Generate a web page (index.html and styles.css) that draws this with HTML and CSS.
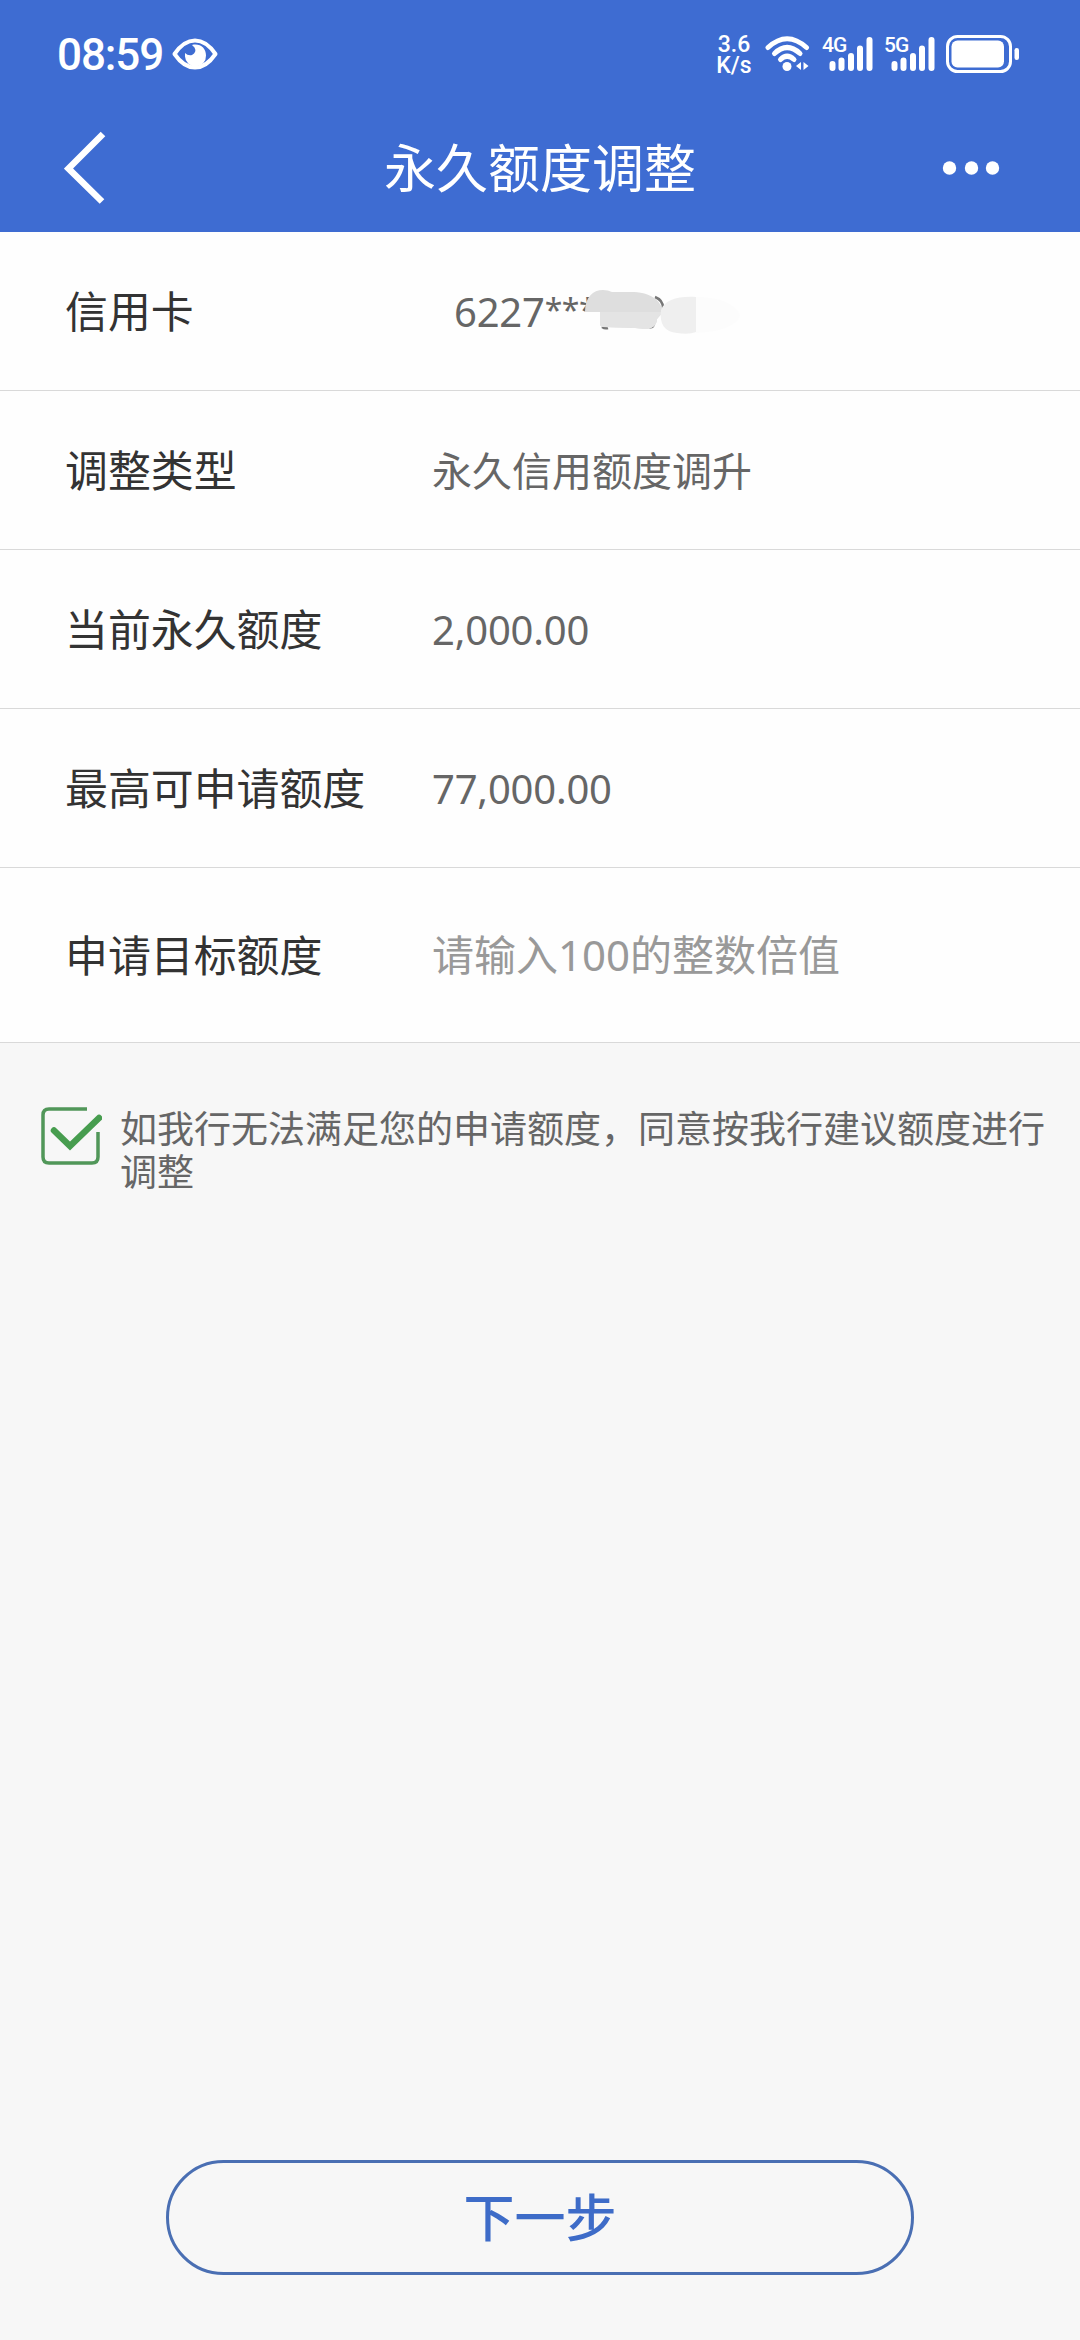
FILE: index.html
```
<!DOCTYPE html>
<html lang="zh-CN">
    <head>
        <meta charset="utf-8">
        <meta name="viewport" content="width=device-width, initial-scale=1">
        <title>永久额度调整</title>
        <link rel="stylesheet" href="styles.css">
    </head>
    <body>
        <header class="top">
            <div class="status">
                <span class="time">08:59</span>
                <svg class="eye" width="46" height="32" viewBox="0 0 46 32">
                    <path d="M2.500 16C9 6.500 16 2.500 23 2.500S37 6.500 43.500 16C37 25.500 30 29.500 23 29.500S9 25.500 2.500 16Z" fill="none" stroke="#fff" stroke-width="4" stroke-linejoin="round"/>
                    <path d="M20 7C28 5 34 10 34 17.500A10.500 10.500 0 0 1 13 18.500L13 15Q16 18 20 17Q25 14 22.500 9.500Z" fill="#fff"/>
                </svg>
                <div class="speed"><span>3.6</span><span>K/s</span></div>
                <svg class="wifi" width="46" height="36" viewBox="0 0 46 36">
                    <g fill="none" stroke="#fff" stroke-width="5" stroke-linecap="round">
                        <path d="M3 11.500Q22 -6 41.500 11.500"/>
                        <path d="M9.500 17.500Q22 5.500 35 17.500"/>
                        <path d="M15.500 23.500Q22 17 29 23.500"/>
                    </g>
                    <circle cx="22" cy="30.500" r="4.500" fill="#fff"/>
                    <path d="M36 26v8l-5-4zM38.500 26v8l5-4z" fill="#fff"/>
                </svg>
                <div class="signal">
                    <span class="net">4G</span>
                    <svg width="44" height="36" viewBox="0 0 44 36">
                        <path d="M3.500 28v4M12.500 24.500v7.500M22 20v12M31 12.500v19.500M40.500 4v28" stroke="#fff" stroke-width="6" stroke-linecap="round"/>
                    </svg>
                </div>
                <div class="signal">
                    <span class="net">5G</span>
                    <svg width="44" height="36" viewBox="0 0 44 36">
                        <path d="M3.500 28v4M12.500 24.500v7.500M22 20v12M31 12.500v19.500M40.500 4v28" stroke="#fff" stroke-width="6" stroke-linecap="round"/>
                    </svg>
                </div>
                <svg class="battery" width="74" height="38" viewBox="0 0 74 38">
                    <rect x="1.500" y="1.500" width="63" height="35" rx="10" fill="none" stroke="#fff" stroke-width="3"/>
                    <rect x="5.500" y="5.500" width="52.500" height="27" rx="6" fill="#fff"/>
                    <rect x="68.500" y="13" width="4.500" height="12" rx="2.200" fill="#fff"/>
                </svg>
            </div>
            <div class="nav">
                <svg class="back" width="44" height="74" viewBox="0 0 44 74">
                    <path d="M39 3L4.500 37.500L38 70.500" fill="none" stroke="#fff" stroke-width="6.500"/>
                </svg>
                <h1>永久额度调整</h1>
                <svg class="more" width="58" height="16" viewBox="0 0 58 16">
                    <g fill="#fff">
                        <circle cx="7.500" cy="8" r="6.700"/>
                        <circle cx="29.500" cy="8" r="6.700"/>
                        <circle cx="50.500" cy="8" r="6.700"/>
                    </g>
                </svg>
            </div>
        </header>

        <div class="form">
            <div class="row">
                <span class="label">信用卡</span>
                <span class="value number card">6227<span class="stars">***</span>
                    <svg class="mask" width="160" height="50" viewBox="0 0 160 50">
                        <path d="M70 10Q78 13 78 21M17 40q3 2 6 1M64 40q4 1 5-3" fill="none" stroke="#777" stroke-width="2.500"/>
                        <path d="M0 25C0 10 8 3 18 3Q23 3 27 5H46C64 5 76 12 78 25L72 32C72 39 66 42 60 42L50 41L18 40Q15 40 15 36V25Z" fill="#dedede"/>
                        <path d="M15 25H78L72 32C72 39 66 42 60 42L50 41L18 40Q15 40 15 36Z" fill="#e4e4e4"/>
                        <path d="M76 23C80 13 92 9 111 10V45Q104 48 92 46C80 45 74 37 76 23Z" fill="#efefef"/>
                        <path d="M111 10Q146 10 155 28Q150 44 111 46Z" fill="#fcfcfc"/>
                    </svg>
                </span>
            </div>
            <div class="row">
                <span class="label">调整类型</span>
                <span class="value">永久信用额度调升</span>
            </div>
            <div class="row">
                <span class="label">当前永久额度</span>
                <span class="value number">2,000.00</span>
            </div>
            <div class="row">
                <span class="label">最高可申请额度</span>
                <span class="value number">77,000.00</span>
            </div>
            <div class="row target">
                <span class="label">申请目标额度</span>
                <input class="value" type="text" placeholder="请输入100的整数倍值">
            </div>
        </div>

        <div class="agree">
            <svg class="check" width="62" height="60" viewBox="0 0 62 60">
                <path d="M47 3H9Q3 3 3 9V51Q3 57 9 57H52Q58 57 58 51V26" fill="none" stroke="#519759" stroke-width="3.500"/>
                <path d="M14 24.500L30 40L59 12" fill="none" stroke="#479d4f" stroke-width="6.500" stroke-linecap="round"/>
            </svg>
            <p>如我行无法满足您的申请额度，同意按我行建议额度进行调整</p>
        </div>

        <button class="next" type="button">下一步</button>
    </body>
</html>
```
FILE: styles.css
```
* {
    box-sizing: border-box;
}
body {
    display: flex;
    flex-direction: column;
    height: 2340px;
    margin: 0;
    background: #f7f7f7;
    color: #333;
    font-family: "Noto Sans", "Noto Sans CJK SC", sans-serif;
}
svg {
    display: block;
    flex: none;
}
.top {
    height: 232px;
    background: #3e6cd2;
    color: #fff;
}
.status {
    display: flex;
    align-items: center;
    height: 108px;
    padding-left: 57px;
    font-family: Roboto, sans-serif;
}
.time {
    width: 108px;
    padding-top: 2px;
    font-size: 44px;
    font-weight: 500;
    letter-spacing: -1.1px;
    white-space: nowrap;
}
.eye {
    margin-left: 7px;
}
.speed {
    display: flex;
    flex-direction: column;
    width: 36px;
    margin-left: 498px;
    padding-top: 2px;
    font-size: 23px;
    font-weight: 500;
    line-height: 21px;
    text-align: center;
}
.wifi {
    margin-left: 13px;
}
.signal {
    position: relative;
    margin-left: 18px;
}
.net {
    position: absolute;
    left: -7px;
    top: 0;
    font-size: 21px;
    font-weight: 500;
    line-height: 18px;
    letter-spacing: -1px;
}
.battery {
    margin-left: 11px;
}
.nav {
    display: grid;
    grid-template-columns: 160px 1fr 160px;
    align-items: center;
    height: 120px;
}
.back {
    margin-left: 64px;
}
.more {
    margin-left: 22px;
}
.nav h1 {
    margin: 0;
    font-size: 52px;
    font-weight: 400;
    line-height: 76px;
    text-align: center;
}
.form {
    background: #fefefe;
}
.row {
    display: flex;
    align-items: center;
    height: 159px;
    padding-left: 65px;
    border-bottom: 1px solid #d9d9d9;
}
.target {
    height: 175px;
}
.label {
    width: 367px;
    padding-bottom: 3px;
    font-size: 42.9px;
}
.value {
    padding-bottom: 3px;
    color: #666;
    font-size: 40px;
}
.number {
    padding-bottom: 0;
    letter-spacing: -0.2px;
}
.card {
    position: relative;
    padding-left: 22px;
}
.stars {
    font-size: 32px;
    line-height: 1;
    letter-spacing: -0.5px;
    vertical-align: 5px;
}
.mask {
    position: absolute;
    left: 153px;
    top: 3px;
}
input.value {
    width: 600px;
    padding: 0 0 2px;
    border: 0;
    background: none;
    font-family: inherit;
    font-size: 42px;
}
input.value::placeholder {
    color: #999;
}
.agree {
    display: flex;
    padding: 63px 30px 0 40px;
}
.agree p {
    margin: 0;
    padding: 1px 0 0 18px;
    color: #666;
    font-size: 37px;
    line-height: 43px;
}
.next {
    width: 748px;
    height: 115px;
    margin: auto auto 65px;
    padding-bottom: 6px;
    border: 3px solid #4a6fb3;
    border-radius: 58px;
    background: none;
    color: #3e6cc8;
    font-family: inherit;
    font-size: 51px;
    font-weight: 500;
}
```
